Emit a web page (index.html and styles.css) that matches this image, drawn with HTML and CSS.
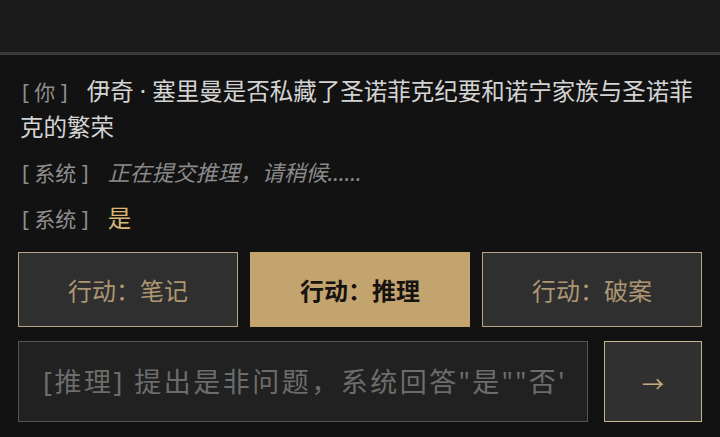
FILE: index.html
```html
<html>
<head>
<meta charset="utf-8">
<title>推理</title>
<link rel="stylesheet" href="styles.css">
</head>
<body>

<div class="top-bar"></div>

<div class="log">
<p class="line"><span class="who">[ 你 ]</span><span class="say">伊奇 · 塞里曼是否私藏了圣诺菲克纪要和诺宁家族与圣诺菲克的繁荣</span></p>
<p class="line"><span class="who">[ 系统 ]</span><span class="wait">正在提交推理，请稍候……</span></p>
<p class="line"><span class="who">[ 系统 ]</span><span class="answer">是</span></p>
</div>

<div class="actions">
<button class="act">行动：笔记</button>
<button class="act act-on">行动：推理</button>
<button class="act">行动：破案</button>
</div>

<form class="ask">
<input class="ask-input" type="text" placeholder="[推理] 提出是非问题，系统回答&quot;是&quot;&quot;否&quot;&quot;无关&quot;">
<button class="ask-go" type="button">→</button>
</form>

</body>
</html>
```

FILE: styles.css
```css
* {
  margin: 0;
  padding: 0;
  box-sizing: border-box;
}

body {
  background-color: #121212;
  font-family: "Noto Sans", "Noto Sans CJK SC", sans-serif;
  color: #d2d2d2;
  overflow: hidden;
}

button, input {
  font-family: "Noto Sans", "Noto Sans CJK SC", sans-serif;
}

.top-bar {
  height: 55px;
  background-color: #1b1b1b;
  border-bottom: 3px solid #3b3b3b;
}

.log {
  padding: 19px 20px 0 20px;
}
.line {
  font-size: 23.5px;
  line-height: 35px;
  margin-bottom: 10px;
}
.line:last-child {
  margin-bottom: 0;
}
.who {
  font-size: 21px;
  color: #8e8e8e;
  margin-right: 19px;
  padding-left: 2px;
  white-space: pre;
}
.say {
  color: #d4d4d4;
}
.wait {
  color: #8a8a8a;
  font-style: italic;
  font-size: 22px;
}
.answer {
  color: #dab679;
}

.actions {
  display: grid;
  grid-template-columns: 1fr 1fr 1fr;
  gap: 12px;
  padding: 0 18px;
  margin-top: 15px;
}
.act {
  height: 75px;
  background-color: #2f2f2f;
  border: 1px solid #b8a482;
  color: #ad9671;
  font-size: 24px;
  cursor: pointer;
}
.act-on {
  background-color: #c4a46e;
  border-color: #c4a46e;
  color: #161310;
  font-weight: bold;
}

.ask {
  display: flex;
  gap: 16px;
  padding: 0 18px;
  margin-top: 14px;
}
.ask-input {
  flex: 1;
  height: 81px;
  background-color: #212121;
  border: 1px solid #555;
  padding: 0 24px;
  font-size: 27px;
  letter-spacing: 2.5px;
  color: #ccc;
  outline: none;
}
.ask-input::placeholder {
  color: #6c6c6c;
}
.ask-go {
  width: 98px;
  height: 81px;
  background-color: #303030;
  border: 1px solid #c8b48f;
  color: #c8ab7c;
  font-size: 22px;
  cursor: pointer;
}
```
